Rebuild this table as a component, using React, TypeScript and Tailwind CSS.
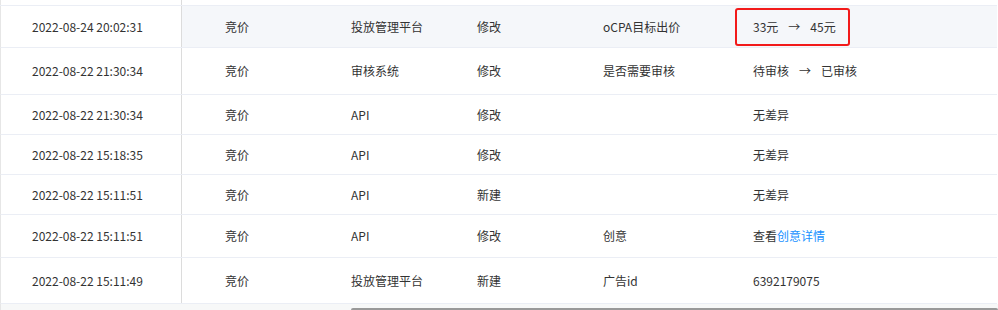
import React from "react";

type Row = {
  time: string;
  h: number;
  c3: string;
  c4: string;
  c5: string;
  c6: React.ReactNode;
  hover?: boolean;
};

const Arrow = () => <span className="mx-[10px]">→</span>;

const rows: Row[] = [
  {
    time: "2022-08-24 20:02:31",
    h: 42,
    c3: "投放管理平台",
    c4: "修改",
    c5: "oCPA目标出价",
    hover: true,
    c6: (
      <span className="inline-flex items-center">
        <span>33元</span>
        <Arrow />
        <span>45元</span>
      </span>
    ),
  },
  {
    time: "2022-08-22 21:30:34",
    h: 47,
    c3: "审核系统",
    c4: "修改",
    c5: "是否需要审核",
    c6: (
      <span className="inline-flex items-center">
        <span>待审核</span>
        <Arrow />
        <span>已审核</span>
      </span>
    ),
  },
  { time: "2022-08-22 21:30:34", h: 40, c3: "API", c4: "修改", c5: "", c6: "无差异" },
  { time: "2022-08-22 15:18:35", h: 40, c3: "API", c4: "修改", c5: "", c6: "无差异" },
  { time: "2022-08-22 15:11:51", h: 40, c3: "API", c4: "新建", c5: "", c6: "无差异" },
  {
    time: "2022-08-22 15:11:51",
    h: 43,
    c3: "API",
    c4: "修改",
    c5: "创意",
    c6: (
      <span>
        查看<span className="text-[#1890ff]">创意详情</span>
      </span>
    ),
  },
  { time: "2022-08-22 15:11:49", h: 46, c3: "投放管理平台", c4: "新建", c5: "广告id", c6: "6392179075" },
];

export default function App() {
  return (
    <div
      className="w-[998px] h-[310px] overflow-hidden bg-white text-[12px] text-[#333]"
      style={{ fontFamily: '"Noto Sans CJK SC", "Noto Sans", sans-serif' }}
    >
      <div className="flex h-[5px] border-l border-[#e6e6e6]">
        <div className="w-[181px] border-r border-[#dcdcdc]" />
        <div className="flex-1" />
      </div>
      <div className="border-t border-[#ebeef5] w-[997px]">
        {rows.map((r, i) => (
          <div
            key={i}
            className="flex border-b border-[#ebeef5] border-l border-l-[#e6e6e6]"
            style={{ height: r.h }}
          >
            <div className="w-[181px] shrink-0 border-r border-[#dcdcdc] bg-white flex items-center pl-[31px]">
              {r.time}
            </div>
            <div className={`flex flex-1 items-center ${r.hover ? "bg-[#f5f7fa]" : "bg-white"}`}>
              <div className="w-[126px] pl-[43px]">竞价</div>
              <div className="w-[126px] pl-[43px]">{r.c3}</div>
              <div className="w-[126px] pl-[43px]">{r.c4}</div>
              <div className="w-[150px] pl-[43px]">{r.c5}</div>
              <div className="relative flex h-full flex-1 items-center pl-[43px]">
                {r.hover && (
                  <span className="absolute left-[25px] top-[2px] h-[38px] w-[115px] rounded-[3px] border-2 border-[#f21a1a]" />
                )}
                {r.c6}
              </div>
            </div>
          </div>
        ))}
      </div>
      <div className="relative h-[7px] bg-[#f7f8f8] border-l border-[#e6e6e6]">
        <div className="absolute left-[350px] right-0 top-[4px] h-[4px] rounded-[2px] bg-[#999]" />
      </div>
    </div>
  );
}
